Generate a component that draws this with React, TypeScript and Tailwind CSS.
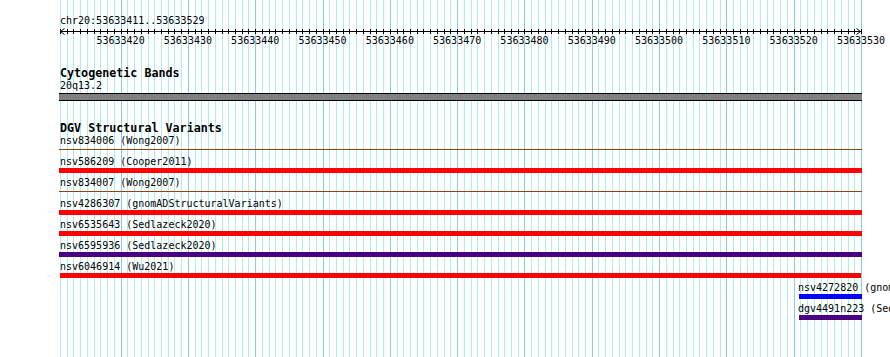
import React from "react";

// 可视区间：chr20:53633411..53633529，每个碱基约 6.73px
const START = 53633411;
const END = 53633530;
const PX_PER_BP = 801 / 119;
const toX = (pos: number) => 60 + (pos - START) * PX_PER_BP;
const positions = Array.from({ length: END - START + 1 }, (_, k) => START + k);

type Variant = {
  id: string;
  study: string;
  label: string;
  bar: string;
  line?: boolean;
};

const variants: Variant[] = [
  { id: "nsv834006", study: "Wong2007", label: "ml-[60px]", bar: "ml-[59px] w-[803px] bg-[#8b4513]", line: true },
  { id: "nsv586209", study: "Cooper2011", label: "ml-[60px]", bar: "ml-[59px] w-[803px] bg-[#ff0000]" },
  { id: "nsv834007", study: "Wong2007", label: "ml-[60px]", bar: "ml-[59px] w-[803px] bg-[#8b4513]", line: true },
  { id: "nsv4286307", study: "gnomADStructuralVariants", label: "ml-[60px]", bar: "ml-[59px] w-[803px] bg-[#ff0000]" },
  { id: "nsv6535643", study: "Sedlazeck2020", label: "ml-[60px]", bar: "ml-[59px] w-[803px] bg-[#ff0000]" },
  { id: "nsv6595936", study: "Sedlazeck2020", label: "ml-[60px]", bar: "ml-[59px] w-[803px] bg-[#4b0082]" },
  { id: "nsv6046914", study: "Wu2021", label: "ml-[60px]", bar: "ml-[60px] w-[801px] bg-[#ff0000]" },
  { id: "nsv4272820", study: "gnomADStructuralVariants", label: "ml-[798px]", bar: "ml-[799px] w-[63px] bg-[#0000ff]" },
  { id: "dgv4491n223", study: "Sedlazeck2020", label: "ml-[798px]", bar: "ml-[799px] w-[63px] bg-[#4b0082]" },
];

/** 背景网格：每个碱基一条细线，整十位置用深一点的蓝色 */
function GridLines() {
  return (
    <svg className="pointer-events-none absolute left-0 top-0" width={890} height={357} aria-hidden="true">
      {positions.map((pos) => {
        const x = Math.round(toX(pos)) + 0.5;
        return (
          <line
            key={pos}
            x1={x}
            x2={x}
            y1={0}
            y2={357}
            stroke={pos % 10 === 0 ? "#87ceeb" : "#afeeee"}
            strokeWidth={1}
          />
        );
      })}
    </svg>
  );
}

/** 标尺：两端箭头 + 每碱基刻度 + 整十坐标 */
function Ruler() {
  return (
    <svg className="block" width={890} height={20}>
      <line x1={60} x2={861} y1={5.5} y2={5.5} stroke="black" strokeWidth={1} />
      <polyline points="64.5,2.5 60.5,5.5 64.5,8.5" fill="none" stroke="black" strokeWidth={1} />
      <polyline points="856.5,2.5 860.5,5.5 856.5,8.5" fill="none" stroke="black" strokeWidth={1} />
      {positions.map((pos) => {
        const x = Math.round(toX(pos)) + 0.5;
        return <line key={pos} x1={x} x2={x} y1={3} y2={8} stroke="black" strokeWidth={1} />;
      })}
      {positions
        .filter((pos) => pos % 10 === 0)
        .map((pos) => (
          <text
            key={pos}
            x={toX(pos)}
            y={18}
            textAnchor="middle"
            fontSize={10}
            fontFamily="'DejaVu Sans Mono', monospace"
            fill="black"
          >
            {pos}
          </text>
        ))}
    </svg>
  );
}

export default function App() {
  return (
    <div className="relative h-[357px] w-[890px] overflow-hidden bg-white font-['DejaVu_Sans_Mono',monospace] text-[10px] text-black">
      <GridLines />
      <div className="relative flex flex-col">
        <div className="ml-[60px] mt-[16px] h-[10px] whitespace-nowrap leading-[10px]">chr20:53633411..53633529</div>
        <Ruler />

        {/* 细胞遗传带 */}
        <h2 className="ml-[60px] mt-[20px] h-[15px] whitespace-nowrap text-[11.7px] font-bold leading-[14px]">
          Cytogenetic Bands
        </h2>
        <div className="ml-[60px] h-[10px] leading-[10px]">20q13.2</div>
        <div className="ml-[59px] mt-[2px] h-[8px] w-[803px] border-y border-black bg-[#808080]" />

        {/* DGV 结构变异 */}
        <h2 className="ml-[60px] mt-[20px] h-[15px] whitespace-nowrap text-[11.7px] font-bold leading-[14px]">
          DGV Structural Variants
        </h2>
        {variants.map((v) => (
          <div key={v.id} className="flex h-[21px] flex-col">
            <div className={`h-[11px] whitespace-nowrap leading-[9px] ${v.label}`}>
              {v.id} ({v.study})
            </div>
            <div className="flex h-[5px] items-center">
              <div className={`${v.bar} ${v.line ? "h-px" : "h-[5px]"}`} />
            </div>
          </div>
        ))}
      </div>
    </div>
  );
}
